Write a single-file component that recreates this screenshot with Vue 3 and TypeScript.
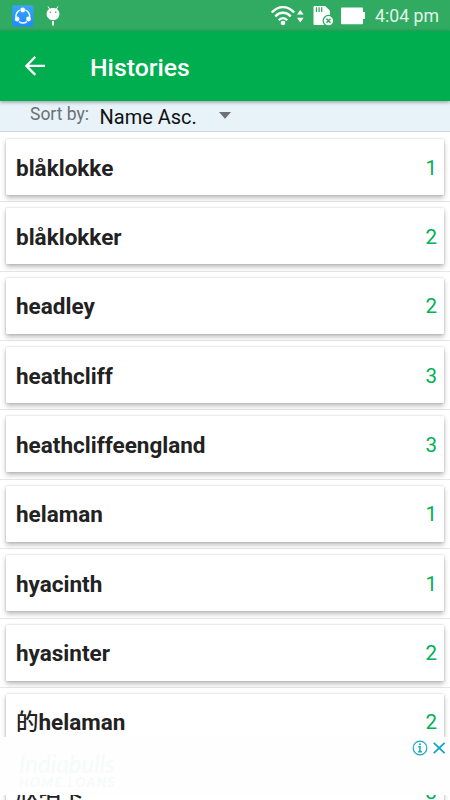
<script setup lang="ts">
interface HistoryItem {
  name: string
  count: number
}

const items: HistoryItem[] = [
  { name: 'blåklokke', count: 1 },
  { name: 'blåklokker', count: 2 },
  { name: 'headley', count: 2 },
  { name: 'heathcliff', count: 3 },
  { name: 'heathcliffeengland', count: 3 },
  { name: 'helaman', count: 1 },
  { name: 'hyacinth', count: 1 },
  { name: 'hyasinter', count: 2 },
  { name: '的helaman', count: 2 },
  { name: '欣唱卡', count: 3 },
]

// Han characters have no bold face on the device, so they are set separately.
const segments = (name: string): string[] => name.match(/[\u4e00-\u9fff]+|[^\u4e00-\u9fff]+/g) ?? []
const isHan = (part: string): boolean => /[\u4e00-\u9fff]/.test(part)
</script>

<template>
  <div class="screen">
    <header class="status">
      <svg class="share" viewBox="0 0 22 22">
        <defs>
          <linearGradient id="blue" x1="0" y1="0" x2="0" y2="1">
            <stop offset="0" stop-color="#38a4fb" />
            <stop offset="1" stop-color="#208bfb" />
          </linearGradient>
        </defs>
        <rect x=".2" y=".2" width="21.3" height="21.2" rx="2.6" fill="url(#blue)" />
        <g fill="none" stroke="#fff" stroke-width="1.4">
          <path d="M8 5.2A7 7 0 0 0 4 12M13.5 5.2A7 7 0 0 1 17.6 12M7 16.6a7 7 0 0 0 8 0" />
        </g>
        <g fill="#fff">
          <circle cx="10.7" cy="5" r="2.4" />
          <circle cx="5.1" cy="14" r="2.4" />
          <circle cx="16.5" cy="14" r="2.4" />
        </g>
      </svg>
      <svg class="droid" viewBox="0 0 14 20">
        <path d="M2.2.8l2 3M11.8.8l-2 3" stroke="#fff" stroke-width="1" stroke-linecap="round" />
        <path d="M7 2C3 2 .6 4.6.6 8S3.5 14.2 7 14.2 13.4 11.5 13.4 8 11 2 7 2z" fill="#fff" />
        <circle cx="4.3" cy="6.3" r=".8" fill="#31ab62" />
        <circle cx="9.7" cy="6.3" r=".8" fill="#31ab62" />
        <path d="M7 15v4.5" stroke="#fff" stroke-width="1.9" />
      </svg>
      <span class="spacer"></span>
      <svg class="wifi" viewBox="0 0 34 22">
        <g fill="none" stroke="#fff" stroke-width="2.3">
          <path d="M.8 7.6C7.3.2 16.7.2 23.2 7.6" />
          <path d="M4.3 11.5c4.2-5 11.2-5 15.4 0" />
          <path d="M7.8 15.2c2.2-2.8 6.2-2.8 8.4 0" />
        </g>
        <circle cx="12" cy="18" r="2.3" fill="#fff" />
        <path d="M26 9.6L29.3 5l3.3 4.6zM26 12.8h6.600l-3.300 4.600z" fill="#fff" />
      </svg>
      <svg class="sd" viewBox="0 0 22 22">
        <path d="M1.500 1h10.700L17 5.800V20H1.500a1 1 0 0 1-1-1V2a1 1 0 0 1 1-1z" fill="#fff" />
        <path d="M3.500 2.300v4.800M6.100 2.300v4.800M8.700 2.300v4.800" stroke="#31ab62" stroke-width="1.300" />
        <circle cx="15.500" cy="15.700" r="5.300" fill="#fff" stroke="#31ab62" stroke-width="1.300" />
        <path d="M13.500 13.700l4 4M17.500 13.700l-4 4" stroke="#31ab62" stroke-width="1.500" />
      </svg>
      <svg class="battery" viewBox="0 0 25 18">
        <path d="M0 1.500Q0 .5 1 .5h20q1 0 1 1v3.500h2v7h-2v4.200q0 1-1 1H1q-1 0-1-1z" fill="#fff" />
      </svg>
      <span class="clock">4:04 pm</span>
    </header>

    <div class="toolbar">
      <svg class="back" viewBox="0 0 20 20">
        <path d="M20 9.900H1.800M10.300.9L1.300 9.900l9 9" fill="none" stroke="#fff" stroke-width="2.200" />
      </svg>
      <h1>Histories</h1>
    </div>

    <div class="sort">
      <span class="label">Sort by:</span>
      <span class="value">Name Asc.</span>
      <svg class="caret" viewBox="0 0 12 7"><path d="M0 0h12L6 6.700z" fill="#6b7175" /></svg>
    </div>

    <ul class="list">
      <li v-for="item in items" :key="item.name">
        <div class="card">
          <span class="name"><span v-for="(part, i) in segments(item.name)" :key="i" :class="{ han: isHan(part) }">{{ part }}</span></span>
          <span class="count">{{ item.count }}</span>
        </div>
      </li>
    </ul>

    <aside class="ad">
      <div class="brand">
        <div class="brand-name">Indiabulls</div>
        <div class="brand-sub">HOME LOANS</div>
      </div>
      <div class="choices">
        <svg viewBox="0 0 16 16">
          <circle cx="8" cy="8" r="6.800" fill="none" stroke="#16a5c9" stroke-width="1.200" />
          <path d="M6.300 6.800H8v4.800M6.200 11.700h3.700" fill="none" stroke="#16a5c9" stroke-width="1.500" />
          <circle cx="8" cy="4.300" r="1" fill="#16a5c9" />
        </svg>
        <svg viewBox="0 0 16 16">
          <path d="M2.800 2.800l10.800 10.400M13.600 2.800L2.800 13.200" fill="none" stroke="#16a5c9" stroke-width="1.800" />
        </svg>
      </div>
    </aside>
  </div>
</template>

<style>
body {
  margin: 0;
  overflow: hidden;
}
</style>

<style scoped>
.screen {
  position: relative;
  width: 450px;
  height: 800px;
  overflow: hidden;
  background: #fff;
  font-family: Roboto, 'Noto Sans CJK SC', sans-serif;
  display: flex;
  flex-direction: column;
}
.status {
  flex: none;
  height: 31px;
  background: #31ab62;
  display: flex;
  align-items: center;
  padding: 0 12px 0 12px;
  box-sizing: border-box;
}
.share {
  width: 22px;
  height: 22px;
}
.droid {
  width: 14px;
  height: 20px;
  margin-left: 12px;
}
.spacer {
  flex: 1;
}
.wifi {
  width: 34px;
  height: 22px;
  margin-right: 8px;
}
.sd {
  width: 22px;
  height: 22px;
  margin-right: 6px;
}
.battery {
  width: 25px;
  height: 18px;
  margin-right: 9px;
}
.clock {
  color: #e2f4e9;
  width: 63px;
  font-size: 17.7px;
  line-height: 31px;
  padding-top: 2px;
  white-space: nowrap;
}
.toolbar {
  flex: none;
  position: relative;
  z-index: 2;
  height: 70px;
  background: #00ae50;
  box-shadow: 0 1px 4px rgba(0, 0, 0, 0.4);
  display: flex;
  align-items: center;
  padding-left: 25px;
}
.back {
  width: 20px;
  height: 20px;
}
h1 {
  margin: 4px 0 0 45px;
  color: #fff;
  font-size: 24.8px;
  font-weight: 500;
  line-height: 30px;
}
.sort {
  flex: none;
  height: 31px;
  box-sizing: border-box;
  background: #e7f2f9;
  border-bottom: 1px solid #ccd7de;
  display: flex;
  align-items: flex-start;
  padding-left: 30px;
}
.label {
  width: 69.5px;
  color: #6b7073;
  font-size: 17.5px;
  line-height: 20px;
  padding-top: 3px;
}
.value {
  width: 119.5px;
  color: #111;
  font-size: 20px;
  line-height: 24px;
  padding-top: 4px;
}
.caret {
  width: 12px;
  height: 7px;
  margin-top: 11px;
}
.list {
  margin: 1px 0 0;
  padding: 0;
  list-style: none;
}
li {
  box-sizing: border-box;
  height: 69.37px;
  padding: 6px 6px 6.37px;
  border-bottom: 1px solid #e6e6e6;
}
.card {
  height: 56px;
  box-sizing: border-box;
  background: #fff;
  border-radius: 1px;
  box-shadow: 0 3px 5px rgba(0, 0, 0, 0.26), 0 0 2px rgba(0, 0, 0, 0.22);
  display: flex;
  align-items: center;
  justify-content: space-between;
  padding: 1px 7px 0 10px;
}
.name {
  color: #222;
  font-size: 22.5px;
  line-height: 26px;
  height: 26px;
  font-weight: 700;
}
.name span {
  display: inline-block;
  height: 26px;
  vertical-align: top;
}
.name .han {
  font-weight: 500;
  line-height: 27px;
}
.count {
  color: #00b056;
  font-size: 20.5px;
  line-height: 24px;
}
.ad {
  position: absolute;
  z-index: 3;
  left: 0;
  top: 737px;
  width: 450px;
  height: 58px;
  background: #fefefe;
  display: flex;
  justify-content: space-between;
  align-items: flex-start;
}
.brand {
  padding: 15px 0 0 19px;
  color: #f8fafa;
  font-family: Lato, sans-serif;
  font-style: italic;
}
.brand-name {
  font-size: 24px;
  line-height: 23px;
  font-weight: 500;
}
.brand-sub {
  font-size: 13px;
  line-height: 14px;
  font-weight: 700;
  letter-spacing: 1.7px;
}
.choices {
  display: flex;
  gap: 3px;
  padding: 3px 3px 0 0;
}
.choices svg {
  width: 16px;
  height: 16px;
}
</style>
